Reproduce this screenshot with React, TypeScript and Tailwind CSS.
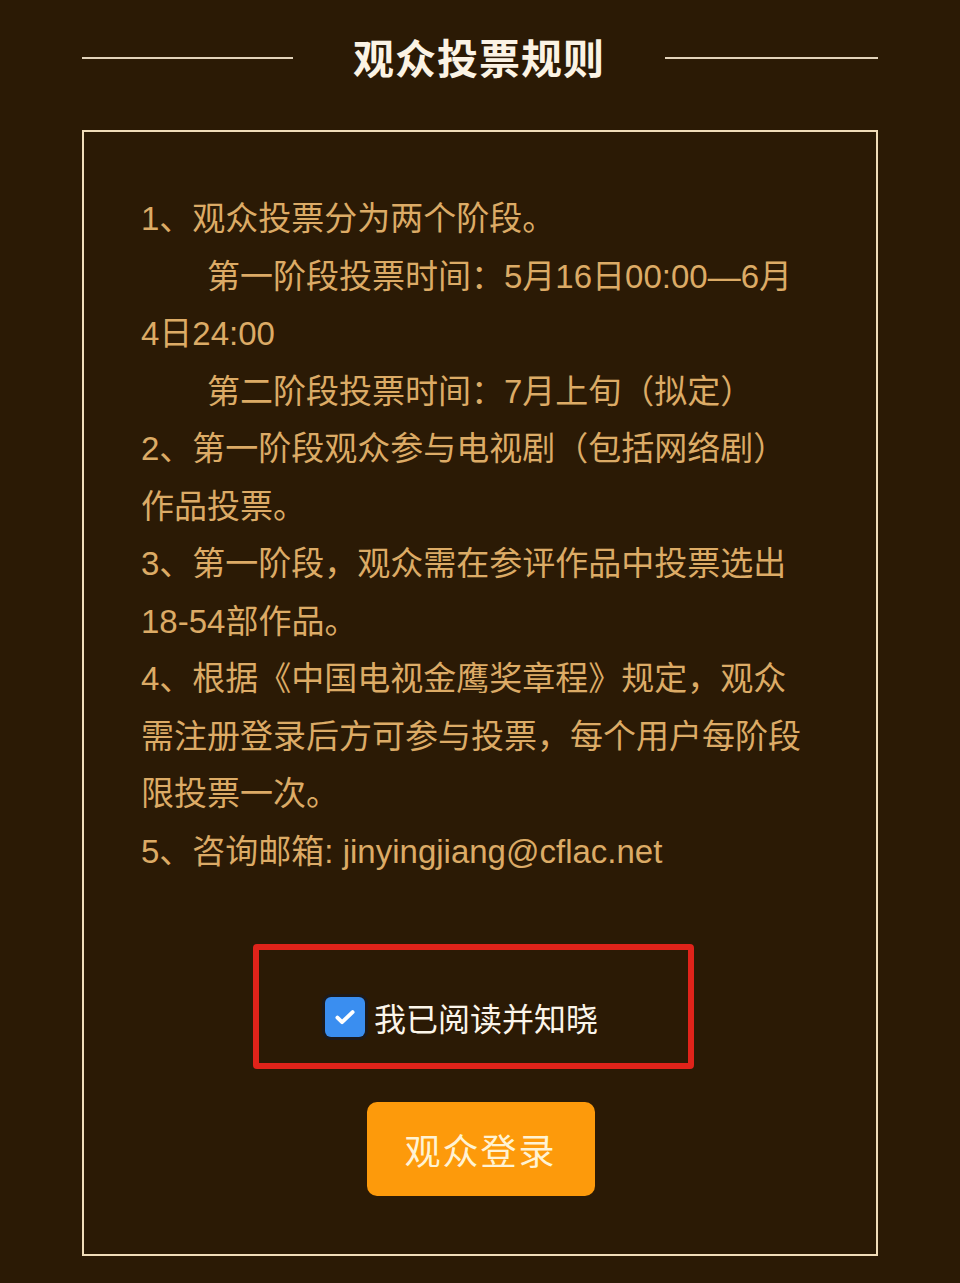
import React from "react";

const lines: { text: string; indent?: boolean }[] = [
  { text: "1、观众投票分为两个阶段。" },
  { text: "第一阶段投票时间：5月16日00:00—6月", indent: true },
  { text: "4日24:00" },
  { text: "第二阶段投票时间：7月上旬（拟定）", indent: true },
  { text: "2、第一阶段观众参与电视剧（包括网络剧）" },
  { text: "作品投票。" },
  { text: "3、第一阶段，观众需在参评作品中投票选出" },
  { text: "18-54部作品。" },
  { text: "4、根据《中国电视金鹰奖章程》规定，观众" },
  { text: "需注册登录后方可参与投票，每个用户每阶段" },
  { text: "限投票一次。" },
  { text: "5、咨询邮箱: jinyingjiang@cflac.net" },
];

export default function App() {
  return (
    <div
      className="w-[960px] h-[1283px] bg-[#2b1a05] overflow-hidden"
      style={{ fontFamily: '"Liberation Sans", "Noto Sans CJK SC", sans-serif' }}
    >
      <div className="flex items-center h-[116px] px-[82px]">
        <div className="w-[211px] h-[2px] bg-[#e2d3bb]" />
        <div
          className="flex-1 text-center text-[41px] font-bold text-[#fbf3e4] tracking-[1px] leading-none -mt-[3px]"
          style={{ fontFamily: '"Noto Sans CJK SC", sans-serif' }}
        >
          观众投票规则
        </div>
        <div className="w-[213px] h-[2px] bg-[#e2d3bb]" />
      </div>
      <div className="mx-[82px] mt-[14px] h-[1126px] border-2 border-[#f0dcb8] flex flex-col">
        <div className="pl-[57px] pt-[58px] text-[33px] leading-[57.5px] text-[#dcab66]">
          {lines.map((l, i) => (
            <div key={i} className={`whitespace-nowrap ${l.indent ? "pl-[66px]" : ""}`}>
              {l.text}
            </div>
          ))}
        </div>
        <div className="ml-[169px] mt-[64px] w-[441px] h-[125px] border-[6px] border-[#e0231a] rounded-[4px] flex items-center pl-[63px] pt-[20px]">
          <div className="w-[46px] h-[46px] rounded-[9px] bg-[#1c1a1c] p-[3px] shrink-0">
            <div className="w-full h-full rounded-[6px] bg-[#3a8ef0] flex items-center justify-center">
              <svg width="26" height="26" viewBox="0 0 24 24" fill="none">
                <path d="M5 12.5l4.3 4.3L19 7.5" stroke="#ffffff" strokeWidth="3.6" strokeLinecap="round" strokeLinejoin="round" />
              </svg>
            </div>
          </div>
          <span
            className="ml-[6px] text-[32px] text-[#fbf5ea] leading-none"
            style={{ fontFamily: '"Noto Sans CJK SC", sans-serif' }}
          >
            我已阅读并知晓
          </span>
        </div>
        <div className="mt-[33px] self-center ml-[1px] w-[228px] h-[94px] rounded-[10px] bg-[#fd9a0b] flex items-center justify-center">
          <span
            className="text-[36px] text-[#fff3d4] tracking-[2px] leading-none"
            style={{ fontFamily: '"Noto Sans CJK SC", sans-serif' }}
          >
            观众登录
          </span>
        </div>
      </div>
    </div>
  );
}
